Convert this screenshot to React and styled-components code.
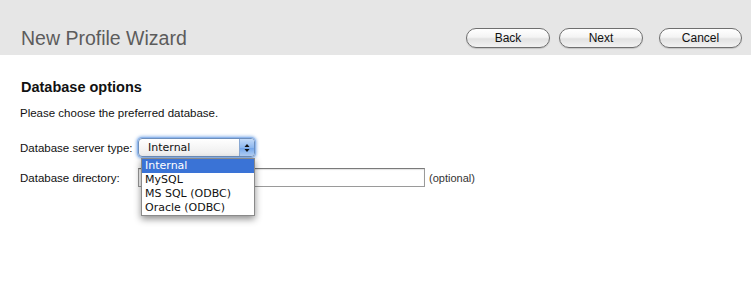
import React from "react";
import styled, { createGlobalStyle } from "styled-components";

const Global = createGlobalStyle`
  html, body { margin: 0; padding: 0; background: #fff; }
  body { font-family: "Liberation Sans", Arial, sans-serif; }
`;

const Page = styled.div`
  width: 751px;
  height: 304px;
  background: #fff;
  overflow: hidden;
`;

const Header = styled.header`
  height: 55px;
  background: #e6e6e6;
  display: flex;
  align-items: flex-end;
  justify-content: space-between;
  padding: 0 9px 7px 20px;
  box-sizing: border-box;
`;

const Title = styled.h1`
  margin: 0 0 0 1px;
  font-size: 19.5px;
  font-weight: normal;
  line-height: 20px;
  color: #5c5c5c;
`;

const Buttons = styled.div`
  display: flex;
  gap: 9px;
`;

const Button = styled.button`
  width: ${(p) => p.$w || 84}px;
  height: 20px;
  margin-left: ${(p) => p.$ml || 0}px;
  border: 1px solid #6f6f6f;
  border-radius: 10px;
  background: linear-gradient(#ffffff 0%, #f4f4f4 45%, #e2e2e2 55%, #f2f2f2 100%);
  box-shadow: 0 1px 1px rgba(0, 0, 0, 0.15);
  font-family: "Liberation Sans", Arial, sans-serif;
  font-size: 12px;
  color: #111;
  padding: 0;
  line-height: 18px;
`;

const Content = styled.main`
  padding: 24px 20px 0 20px;
`;

const Heading = styled.h2`
  margin: 0 0 0 1px;
  font-size: 14.5px;
  line-height: 17px;
  font-weight: bold;
  color: #111;
`;

const Intro = styled.p`
  margin: 10px 0 0;
  font-size: 11.5px;
  line-height: 14px;
  color: #111;
`;

const Form = styled.div`
  margin-top: 18px;
  display: grid;
  grid-template-columns: 118px auto 1fr;
  row-gap: 11px;
  align-items: center;
`;

const Label = styled.label`
  font-size: 11.5px;
  color: #111;
  line-height: 14px;
`;

const SelectWrap = styled.div`
  position: relative;
  width: 117px;
  height: 19px;
`;

const SelectBox = styled.div`
  box-sizing: border-box;
  width: 100%;
  height: 100%;
  border: 1px solid #6d8fbd;
  border-radius: 4px;
  background: linear-gradient(#ffffff, #ececec);
  box-shadow: 0 0 0 1px #8fb6ec, 0 0 3px 2px rgba(80, 140, 220, 0.55);
  display: flex;
  align-items: center;
  overflow: hidden;
`;

const SelectText = styled.span`
  flex: 1;
  padding-left: 9px;
  font-family: "DejaVu Sans", "Liberation Sans", sans-serif;
  font-size: 11px;
  color: #111;
`;

const Arrows = styled.span`
  width: 14px;
  height: 100%;
  background: linear-gradient(#c3daf8, #8db8f0 50%, #6fa3ea 52%, #b4d1f6);
  border-left: 1px solid #8aa9d3;
  display: flex;
  align-items: center;
  justify-content: center;
`;

const Menu = styled.ul`
  position: absolute;
  top: 20px;
  left: 3px;
  width: 112px;
  margin: 0;
  padding: 0;
  list-style: none;
  background: #fff;
  border: 1px solid #8a8a8a;
  box-shadow: 0 3px 7px rgba(0, 0, 0, 0.45);
  z-index: 2;
`;

const Item = styled.li`
  height: 14px;
  line-height: 14px;
  padding-left: 3px;
  font-family: "DejaVu Sans", "Liberation Sans", sans-serif;
  font-size: 11px;
  color: ${(p) => (p.$active ? "#fff" : "#111")};
  background: ${(p) => (p.$active ? "#3a73d6" : "transparent")};
`;

const Input = styled.input`
  box-sizing: border-box;
  width: 287px;
  height: 19px;
  border: 1px solid #9a9a9a;
  border-top-color: #7a7a7a;
  margin: 0;
  box-shadow: inset 0 1px 1px rgba(0, 0, 0, 0.12);
`;

const DirCell = styled.div`
  display: flex;
  align-items: center;
  gap: 4px;
  grid-column: 2 / 4;
`;

const Hint = styled.span`
  font-size: 11px;
  color: #333;
`;

export default function App() {
  return (
    <Page>
      <Global />
      <Header>
        <Title>New Profile Wizard</Title>
        <Buttons>
          <Button>Back</Button>
          <Button>Next</Button>
          <Button $ml={7} $w={83}>Cancel</Button>
        </Buttons>
      </Header>
      <Content>
        <Heading>Database options</Heading>
        <Intro>Please choose the preferred database.</Intro>
        <Form>
          <Label>Database server type:</Label>
          <SelectWrap>
            <SelectBox>
              <SelectText>Internal</SelectText>
              <Arrows>
                <svg width="6" height="10" viewBox="0 0 6 10">
                  <path d="M3 1 L5.5 4 L0.5 4 Z" fill="#111" />
                  <path d="M3 9 L5.5 6 L0.5 6 Z" fill="#111" />
                </svg>
              </Arrows>
            </SelectBox>
            <Menu>
              <Item $active>Internal</Item>
              <Item>MySQL</Item>
              <Item>MS SQL (ODBC)</Item>
              <Item>Oracle (ODBC)</Item>
            </Menu>
          </SelectWrap>
          <span />
          <Label>Database directory:</Label>
          <DirCell>
            <Input type="text" />
            <Hint>(optional)</Hint>
          </DirCell>
        </Form>
      </Content>
    </Page>
  );
}
